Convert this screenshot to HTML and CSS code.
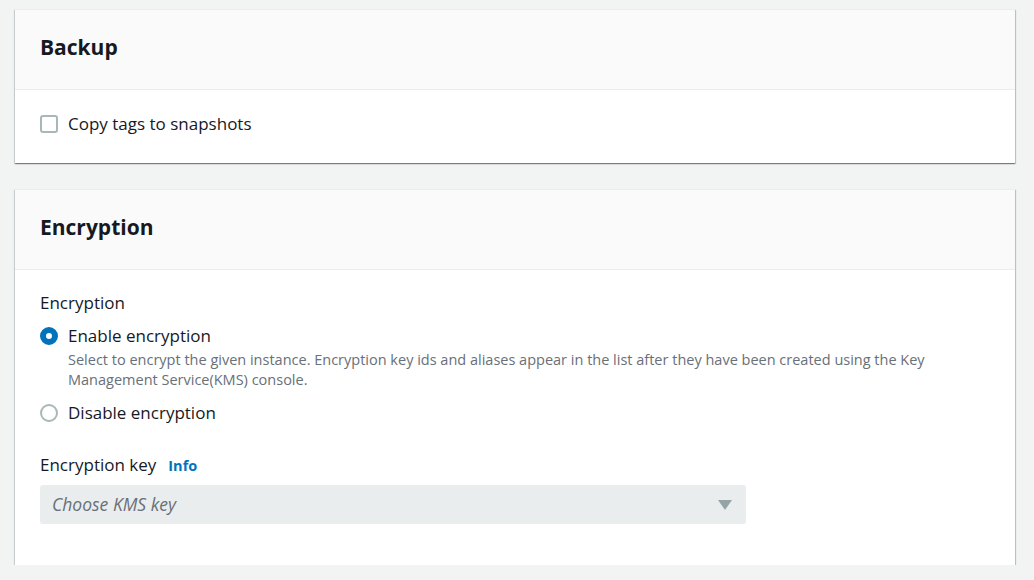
FILE: index.html
```html
<!DOCTYPE html>
<html>
<head>
<meta charset="utf-8">
<link rel="stylesheet" href="styles.css">
</head>
<body>
<div class="page">
  <section class="card">
    <div class="card-header"><h2>Backup</h2></div>
    <div class="card-body body-backup">
      <label class="check-row">
        <span class="checkbox"></span>
        <span class="opt-label">Copy tags to snapshots</span>
      </label>
    </div>
  </section>

  <section class="card">
    <div class="card-header"><h2>Encryption</h2></div>
    <div class="card-body body-enc">
      <div class="field-label">Encryption</div>
      <div class="radio-group">
        <div class="radio-item">
          <div class="radio-row">
            <span class="radio checked"></span>
            <span class="opt-label">Enable encryption</span>
          </div>
          <div class="desc">Select to encrypt the given instance. Encryption key ids and aliases appear in the list after they have been created using the Key Management Service(KMS) console.</div>
        </div>
        <div class="radio-item">
          <div class="radio-row">
            <span class="radio"></span>
            <span class="opt-label">Disable encryption</span>
          </div>
        </div>
      </div>
      <div class="field-label key-label">Encryption key <a class="info">Info</a></div>
      <div class="select">
        <span class="placeholder">Choose KMS key</span>
        <svg class="caret" width="14" height="10" viewBox="0 0 14 10"><polygon points="0,0 14,0 7,10" fill="#95a5a6"/></svg>
      </div>
    </div>
  </section>
</div>
</body>
</html>
```

FILE: styles.css
```css
html, body {
  margin: 0;
  padding: 0;
  background: #f2f3f3;
}
body {
  font-family: "Open Sans", "Noto Sans", Arial, sans-serif;
  color: #16191f;
}
.page {
  padding: 9px 19px 0 15px;
  display: flex;
  flex-direction: column;
  gap: 26px;
}
.card {
  background: #fff;
  box-shadow: 0 1px 1px 0 rgba(0, 28, 36, 0.35), 1px 1px 1px 0 rgba(0, 28, 36, 0.18), -1px 1px 1px 0 rgba(0, 28, 36, 0.12);
  border-top: 1px solid #eaeded;
}
.card-header {
  background: #fafafa;
  border-bottom: 1px solid #eaeded;
  height: 79px;
  display: flex;
  align-items: center;
  padding: 0 25px;
}
.card-header h2 {
  margin: 0;
  font-size: 21px;
  font-weight: 700;
  line-height: 28px;
  color: #16191f;
  position: relative;
  top: -3px;
}
.card-body {
  padding: 0 25px;
}
.body-backup {
  padding-top: 23px;
  padding-bottom: 28px;
}
.body-enc {
  padding-top: 22px;
  padding-bottom: 41px;
}
.check-row, .radio-row {
  display: flex;
  align-items: center;
  gap: 10px;
  height: 22px;
}
.checkbox {
  width: 14px;
  height: 14px;
  border: 2px solid #aab7b8;
  border-radius: 3px;
  flex: none;
}
.opt-label {
  font-size: 17px;
  line-height: 22px;
}
.field-label {
  font-size: 17px;
  line-height: 22px;
}
.radio-group {
  margin-top: 11px;
  display: flex;
  flex-direction: column;
  gap: 12px;
}
.radio {
  width: 14px;
  height: 14px;
  border: 2px solid #aab7b8;
  border-radius: 50%;
  flex: none;
  box-sizing: content-box;
}
.radio.checked {
  width: 6px;
  height: 6px;
  border: 6px solid #0073bb;
  background: #fff;
}
.desc {
  margin-left: 28px;
  margin-top: 3px;
  max-width: 880px;
  font-size: 14.5px;
  line-height: 20px;
  color: #687078;
}
.key-label {
  margin-top: 30px;
  display: flex;
  align-items: baseline;
  gap: 12px;
}
.info {
  color: #0073bb;
  font-weight: 700;
  font-size: 14.5px;
}
.select {
  margin-top: 8px;
  width: 706px;
  height: 39px;
  background: #eaeded;
  border-radius: 3px;
  display: flex;
  align-items: center;
  justify-content: space-between;
  padding: 0 14px 2px 12px;
  box-sizing: border-box;
}
.placeholder {
  font-style: italic;
  font-size: 17.5px;
  color: #687078;
}
.caret {
  display: block;
  position: relative;
  top: 1px;
}
```
